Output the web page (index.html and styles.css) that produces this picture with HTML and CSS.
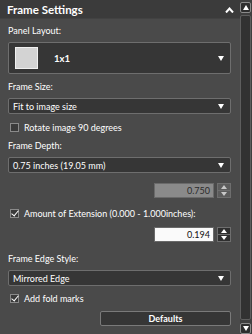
FILE: index.html
```html
<!DOCTYPE html>
<html lang="en">
<head>
    <meta charset="UTF-8">
    <title>Frame Settings</title>
    <link rel="stylesheet" href="styles.css">
</head>
<body>
    <div class="window">
        <div class="panel">
            <div class="header">
                <span class="title">Frame Settings</span>
                <svg class="chevron" width="9" height="6" viewBox="0 0 9 6">
                    <path d="M1 5.5 L4.5 1.5 L8 5.5" fill="none" stroke="#fff" stroke-width="2"/>
                </svg>
            </div>

            <div class="content">
                <div class="label first">Panel Layout:</div>
                <div class="select big">
                    <span class="thumb"></span>
                    <span class="big-text">1x1</span>
                    <span class="arrow"></span>
                </div>

                <div class="label gap-6">Frame Size:</div>
                <div class="select">
                    <span>Fit to image size</span>
                    <span class="arrow"></span>
                </div>

                <div class="check-row gap-7">
                    <span class="box"></span>
                    <span>Rotate image 90 degrees</span>
                </div>

                <div class="label gap-6">Frame Depth:</div>
                <div class="select">
                    <span>0.75 inches (19.05 mm)</span>
                    <span class="arrow"></span>
                </div>

                <div class="spin-row gap-10">
                    <div class="spin-field disabled">0.750</div>
                    <div class="spin-btns disabled">
                        <span class="up"></span>
                        <span class="down"></span>
                    </div>
                </div>

                <div class="check-row gap-9">
                    <span class="box checked"></span>
                    <span>Amount of Extension (0.000 - 1.000inches):</span>
                </div>

                <div class="spin-row gap-8">
                    <div class="spin-field">0.194</div>
                    <div class="spin-btns">
                        <span class="up"></span>
                        <span class="down"></span>
                    </div>
                </div>

                <div class="label gap-10">Frame Edge Style:</div>
                <div class="select">
                    <span>Mirrored Edge</span>
                    <span class="arrow"></span>
                </div>

                <div class="check-row gap-6">
                    <span class="box checked"></span>
                    <span>Add fold marks</span>
                </div>

                <div class="button-row">
                    <div class="button">Defaults</div>
                </div>
            </div>
        </div>

        <div class="scrollbar">
            <div class="sb-btn"><span class="tri-up"></span></div>
            <div class="sb-track"></div>
            <div class="sb-btn"><span class="tri-down"></span></div>
        </div>
    </div>
</body>
</html>
```

FILE: styles.css
```css
body {
    margin: 0;
    background-color: #484848;
    color: #ffffff;
    font-family: Lato, 'Noto Sans', sans-serif;
    font-size: 9px;
}

.window {
    display: flex;
    width: 252px;
    height: 334px;
    overflow: hidden;
}

.panel {
    width: 240px;
    background-color: #4a4a4a;
}

.header {
    height: 18px;
    display: flex;
    align-items: center;
    justify-content: space-between;
    padding: 0 6px 0 7px;
    background-color: #3b3b3b;
    border-bottom: 1px solid #424242;
}

.title {
    font-size: 11.5px;
    font-weight: 700;
    color: #ffffff;
}

.chevron {
    margin-top: 1px;
}

.content {
    padding: 0 9px 0 8px;
}

.label {
    height: 13px;
    line-height: 13px;
    margin-top: 5px;
}

.label.first {
    margin-top: 5px;
}

.gap-6 { margin-top: 6px; }
.gap-7 { margin-top: 7px; }
.gap-8 { margin-top: 8px; }
.gap-9 { margin-top: 9px; }
.gap-10 { margin-top: 10px; }

.select {
    display: flex;
    align-items: center;
    height: 14px;
    margin-top: 5px;
    padding: 0 5px 0 4px;
    background-color: #363636;
    border: 1px solid #6e6e6e;
    border-radius: 2px;
    color: #ffffff;
}

.select span:first-child {
    flex: 1;
}

.select.big {
    height: 30px;
    padding-left: 6px;
}

.thumb {
    flex: none !important;
    width: 21px;
    height: 20px;
    background-color: #d3d3d3;
    border: 1px solid #f0f0f0;
}

.big-text {
    flex: 1;
    margin-left: 16px;
    font-weight: 700;
    font-size: 9.5px;
}

.arrow {
    width: 0;
    height: 0;
    border-left: 3.5px solid transparent;
    border-right: 3.5px solid transparent;
    border-top: 5px solid #ffffff;
    margin-right: 1px;
}

.check-row {
    display: flex;
    align-items: center;
    height: 12px;
    padding-left: 2px;
    white-space: nowrap;
}

.box {
    width: 7px;
    height: 7px;
    margin-right: 5px;
    background-color: #3a3a3a;
    border: 1px solid #8a8a8a;
    position: relative;
}

.box.checked::after {
    content: "";
    position: absolute;
    left: 2px;
    top: -1px;
    width: 3px;
    height: 6px;
    border-right: 1.5px solid #ffffff;
    border-bottom: 1.5px solid #ffffff;
    transform: rotate(40deg);
}

.spin-row {
    display: flex;
    justify-content: flex-end;
    gap: 3px;
}

.spin-field {
    width: 55px;
    height: 13px;
    line-height: 13px;
    padding-right: 3px;
    text-align: right;
    background-color: #fafafa;
    border: 1px solid #6a6a6a;
    color: #111111;
}

.spin-field.disabled {
    background-color: #8a8a8a;
    color: #2a2a2a;
}

.spin-btns {
    display: flex;
    flex-direction: column;
    width: 14px;
    height: 15px;
    background-color: #2f2f2f;
    border-radius: 1px;
}

.spin-btns span {
    flex: 1;
    display: flex;
    align-items: center;
    justify-content: center;
    border: 1px solid #6e6e6e;
}

.spin-btns span + span {
    border-top: none;
}

.spin-btns.disabled {
    background-color: #5c5c5c;
}

.spin-btns span::after {
    content: "";
    width: 0;
    height: 0;
    border-left: 3.5px solid transparent;
    border-right: 3.5px solid transparent;
}

.spin-btns .up::after {
    border-bottom: 4px solid #ffffff;
}

.spin-btns .down::after {
    border-top: 4px solid #ffffff;
}

.spin-btns.disabled .up::after {
    border-bottom-color: #c8c8c8;
}

.spin-btns.disabled .down::after {
    border-top-color: #c8c8c8;
}

.button-row {
    display: flex;
    justify-content: flex-end;
    margin-top: 7px;
}

.button {
    width: 129px;
    height: 13px;
    line-height: 13px;
    text-align: center;
    background-color: #363636;
    border: 1px solid #7a7a7a;
    border-radius: 2px;
    font-weight: 700;
    color: #ffffff;
}

.scrollbar {
    width: 12px;
    display: flex;
    flex-direction: column;
    align-items: flex-start;
    padding-top: 2px;
    background-color: #3f3f3f;
}

.sb-btn {
    width: 9px;
    height: 9px;
    display: flex;
    align-items: center;
    justify-content: center;
    background-color: #2e2e2e;
    border: 1px solid #8a8a8a;
    border-radius: 2px;
}

.sb-track {
    width: 9px;
    height: 303px;
    margin: 2px 0 3px 0;
    background-color: #323232;
    border: 1px solid #5e5e5e;
    border-radius: 2px;
}

.tri-up, .tri-down {
    width: 0;
    height: 0;
    border-left: 3.5px solid transparent;
    border-right: 3.5px solid transparent;
}

.tri-up {
    border-bottom: 5px solid #ffffff;
}

.tri-down {
    border-top: 5px solid #ffffff;
}
```
